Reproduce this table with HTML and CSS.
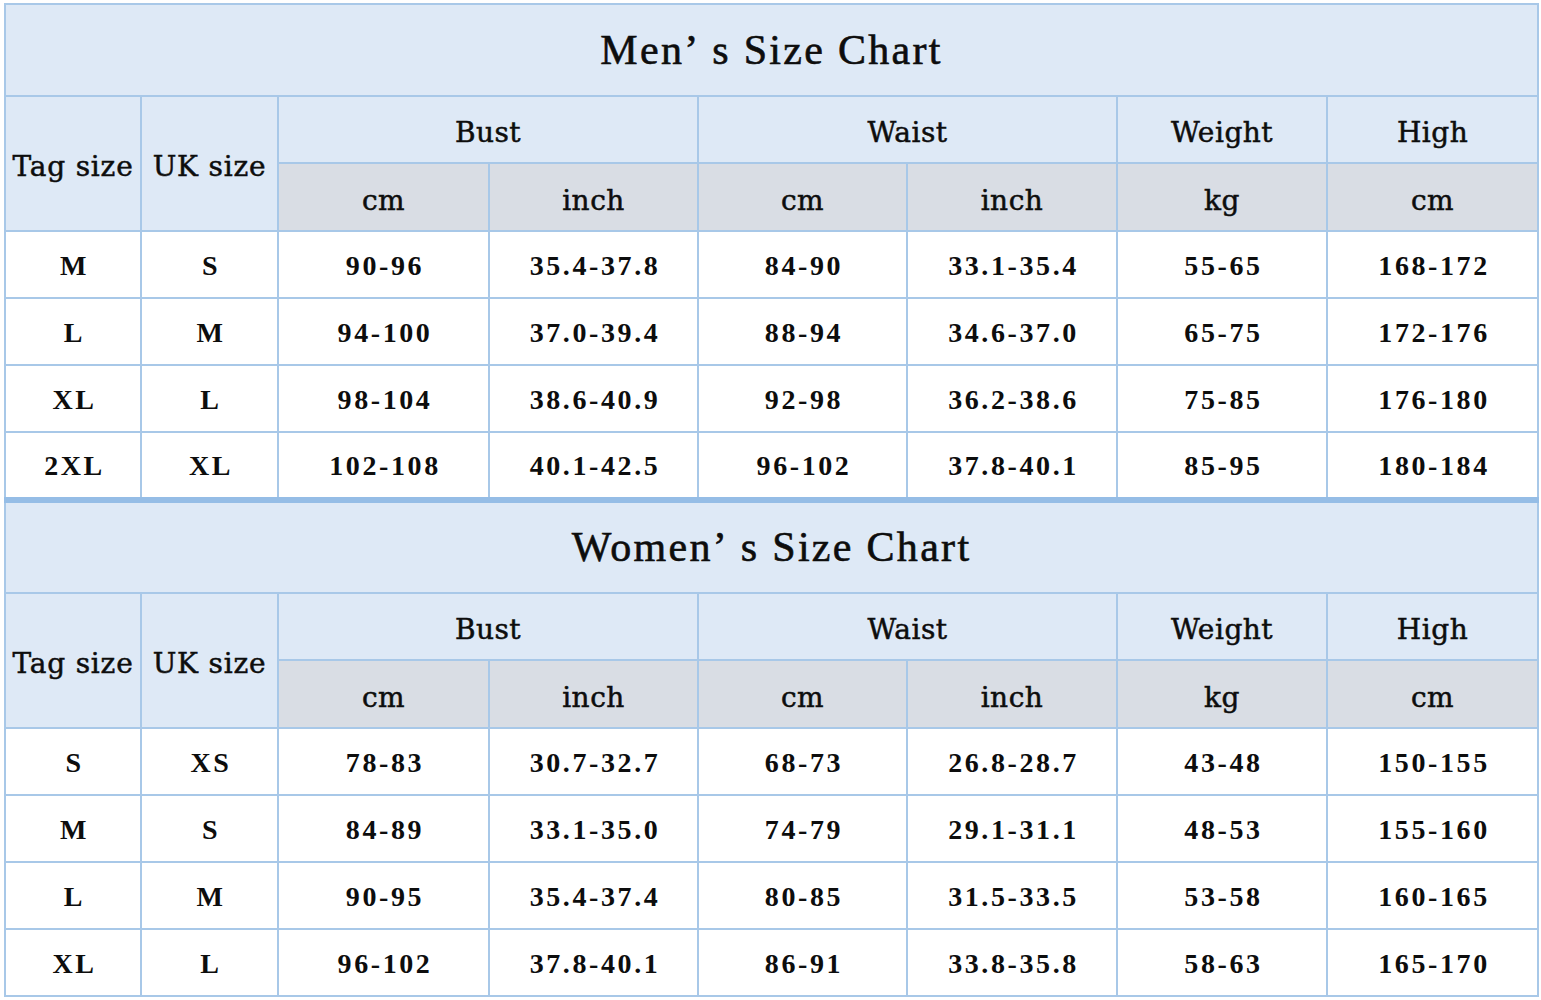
FILE: index.html
```html
<!DOCTYPE html>
<html lang="en">
<head>
<meta charset="utf-8">
<title>Size Chart</title>
<link rel="stylesheet" href="styles.css">
</head>
<body>
<div class="page">
  <table class="chart men">
    <colgroup>
      <col class="c-tag"><col class="c-uk"><col class="c-a"><col class="c-b"><col class="c-b"><col class="c-c"><col class="c-c"><col class="c-a">
    </colgroup>
    <tr class="title-row"><th colspan="8" class="title">Men<span class="apos">’</span>s Size Chart</th></tr>
    <tr class="head1">
      <th rowspan="2" class="lbl">Tag size</th>
      <th rowspan="2" class="lbl">UK size</th>
      <th colspan="2">Bust</th>
      <th colspan="2">Waist</th>
      <th>Weight</th>
      <th>High</th>
    </tr>
    <tr class="head2">
      <th>cm</th><th>inch</th><th>cm</th><th>inch</th><th>kg</th><th>cm</th>
    </tr>
    <tr class="data"><td>M</td><td>S</td><td>90-96</td><td>35.4-37.8</td><td>84-90</td><td>33.1-35.4</td><td>55-65</td><td>168-172</td></tr>
    <tr class="data"><td>L</td><td>M</td><td>94-100</td><td>37.0-39.4</td><td>88-94</td><td>34.6-37.0</td><td>65-75</td><td>172-176</td></tr>
    <tr class="data"><td>XL</td><td>L</td><td>98-104</td><td>38.6-40.9</td><td>92-98</td><td>36.2-38.6</td><td>75-85</td><td>176-180</td></tr>
    <tr class="data last"><td>2XL</td><td>XL</td><td>102-108</td><td>40.1-42.5</td><td>96-102</td><td>37.8-40.1</td><td>85-95</td><td>180-184</td></tr>
  </table>
  <table class="chart women">
    <colgroup>
      <col class="c-tag"><col class="c-uk"><col class="c-a"><col class="c-b"><col class="c-b"><col class="c-c"><col class="c-c"><col class="c-a">
    </colgroup>
    <tr class="title-row"><th colspan="8" class="title">Women<span class="apos">’</span>s Size Chart</th></tr>
    <tr class="head1">
      <th rowspan="2" class="lbl">Tag size</th>
      <th rowspan="2" class="lbl">UK size</th>
      <th colspan="2">Bust</th>
      <th colspan="2">Waist</th>
      <th>Weight</th>
      <th>High</th>
    </tr>
    <tr class="head2">
      <th>cm</th><th>inch</th><th>cm</th><th>inch</th><th>kg</th><th>cm</th>
    </tr>
    <tr class="data"><td>S</td><td>XS</td><td>78-83</td><td>30.7-32.7</td><td>68-73</td><td>26.8-28.7</td><td>43-48</td><td>150-155</td></tr>
    <tr class="data"><td>M</td><td>S</td><td>84-89</td><td>33.1-35.0</td><td>74-79</td><td>29.1-31.1</td><td>48-53</td><td>155-160</td></tr>
    <tr class="data"><td>L</td><td>M</td><td>90-95</td><td>35.4-37.4</td><td>80-85</td><td>31.5-33.5</td><td>53-58</td><td>160-165</td></tr>
    <tr class="data"><td>XL</td><td>L</td><td>96-102</td><td>37.8-40.1</td><td>86-91</td><td>33.8-35.8</td><td>58-63</td><td>165-170</td></tr>
  </table>
</div>
</body>
</html>
```

FILE: styles.css
```css
html, body {
  margin: 0;
  padding: 0;
  background: #ffffff;
}

.page {
  padding: 3px 4px 0 4px;
  width: 1533px;
}

.chart {
  border-collapse: collapse;
  table-layout: fixed;
  width: 1533px;
  color: #0d0d0d;
  border: 2px solid #9fc3e7;
}

.men {
  border-bottom: 3px solid #95bde6;
}

.women {
  border-top: 3px solid #95bde6;
}

.c-tag { width: 136px; }
.c-uk { width: 137px; }
.c-a { width: 211px; }
.c-b { width: 209px; }
.c-c { width: 210px; }

.chart th,
.chart td {
  border: 2px solid #a8c8e8;
  padding: 0;
  text-align: center;
  vertical-align: middle;
  white-space: nowrap;
  overflow: hidden;
}

.title-row { height: 92px; }
.head1 { height: 67px; }
.head2 { height: 68px; }
.data { height: 67px; }
.data.last { height: 66px; }

.title {
  background: #dee9f6;
  font-family: "Liberation Serif", "Times New Roman", serif;
  font-size: 42px;
  font-weight: normal;
  letter-spacing: 2.3px;
  padding: 6px 0 0 2px;
  -webkit-text-stroke: 0.6px #0d0d0d;
}

.apos {
  display: inline-block;
  width: 28px;
  text-align: left;
}

.head1 th,
.lbl {
  background: #dee9f6;
}

.head1 th,
.head2 th {
  font-family: "DejaVu Serif", "Liberation Serif", serif;
  font-size: 28px;
  font-weight: normal;
  letter-spacing: 0.5px;
  padding-top: 6px;
  -webkit-text-stroke: 0.5px #0d0d0d;
}

.head1 .lbl {
  letter-spacing: 0.8px;
  font-size: 28px;
}

.head2 th {
  background: #d9dde4;
}

.data td {
  background: #ffffff;
  font-family: "Liberation Serif", "Times New Roman", serif;
  font-weight: bold;
  font-size: 28px;
  letter-spacing: 2.6px;
  padding: 3px 0 0 3px;
}
```
